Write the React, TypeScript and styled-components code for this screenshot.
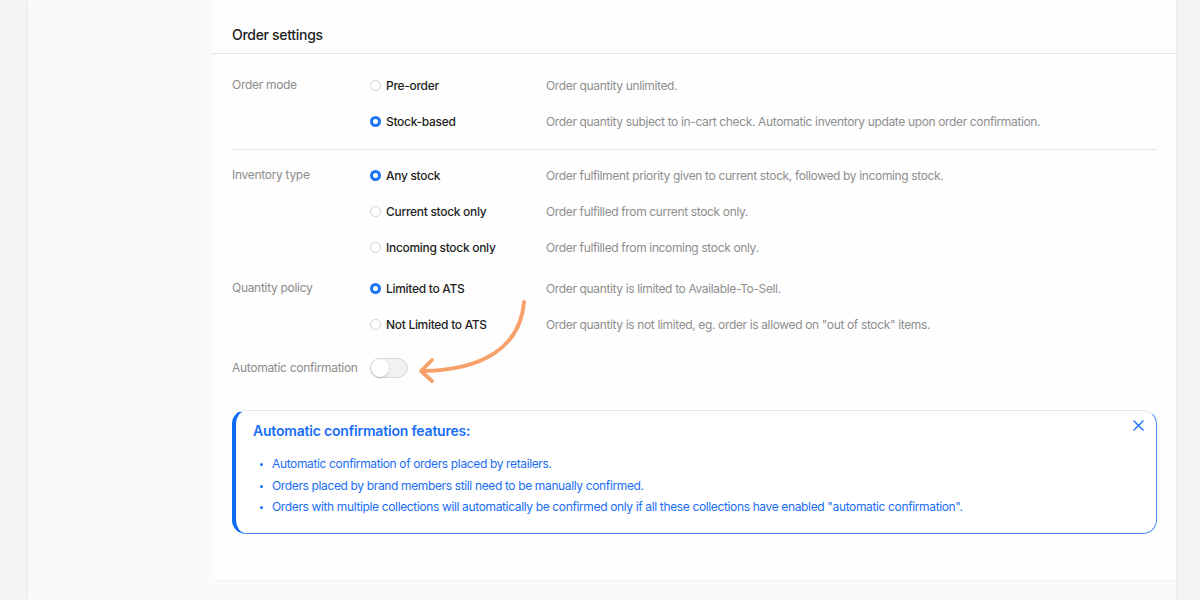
import styled, { createGlobalStyle } from 'styled-components';

const GlobalStyle = createGlobalStyle`
  html, body {
    margin: 0;
    padding: 0;
    background: #f2f2f2;
    font-family: Inter, "Liberation Sans", sans-serif;
  }
`;

interface Option {
  label: string;
  description: string;
  checked?: boolean;
}

interface Field {
  label: string;
  options: Option[];
  divider?: boolean;
  gap: number;
}

const fields: Field[] = [
  {
    label: 'Order mode',
    gap: 13,
    divider: true,
    options: [
      { label: 'Pre-order', description: 'Order quantity unlimited.' },
      {
        label: 'Stock-based',
        description:
          'Order quantity subject to in-cart check. Automatic inventory update upon order confirmation.',
        checked: true,
      },
    ],
  },
  {
    label: 'Inventory type',
    gap: 7,
    options: [
      {
        label: 'Any stock',
        description: 'Order fulfilment priority given to current stock, followed by incoming stock.',
        checked: true,
      },
      { label: 'Current stock only', description: 'Order fulfilled from current stock only.' },
      { label: 'Incoming stock only', description: 'Order fulfilled from incoming stock only.' },
    ],
  },
  {
    label: 'Quantity policy',
    gap: 5,
    options: [
      {
        label: 'Limited to ATS',
        description: 'Order quantity is limited to Available-To-Sell.',
        checked: true,
      },
      {
        label: 'Not Limited to ATS',
        description: 'Order quantity is not limited, eg. order is allowed on "out of stock" items.',
      },
    ],
  },
];

const notes = [
  'Automatic confirmation of orders placed by retailers.',
  'Orders placed by brand members still need to be manually confirmed.',
  'Orders with multiple collections will automatically be confirmed only if all these collections have enabled "automatic confirmation".',
];

export default function App() {
  return (
    <>
      <GlobalStyle />
      <Page>
        <Panel>
          <Sidebar />
          <Main>
            <Header>Order settings</Header>
            <Body>
              {fields.map((field) => (
                <FieldRow key={field.label} $gap={field.gap} $divider={!!field.divider}>
                  <Label>{field.label}</Label>
                  <Options>
                    {field.options.map((opt) => (
                      <OptionRow key={opt.label}>
                        <RadioWrap>
                          <Radio $checked={!!opt.checked} />
                          <OptionLabel>{opt.label}</OptionLabel>
                        </RadioWrap>
                        <Description>{opt.description}</Description>
                      </OptionRow>
                    ))}
                  </Options>
                </FieldRow>
              ))}

              <FieldRow $gap={8} $divider={false}>
                <Label>Automatic confirmation</Label>
                <Options>
                  <OptionRow>
                    <Toggle>
                      <Knob />
                    </Toggle>
                  </OptionRow>
                </Options>
              </FieldRow>

              <InfoBox>
                <InfoTitle>Automatic confirmation features:</InfoTitle>
                <CloseButton aria-label="close">
                  <svg width="11" height="11" viewBox="0 0 11 11">
                    <path d="M1 1L10 10M10 1L1 10" stroke="#1a6ef5" strokeWidth="1.4" strokeLinecap="round" />
                  </svg>
                </CloseButton>
                <NoteList>
                  {notes.map((n) => (
                    <Note key={n}>{n}</Note>
                  ))}
                </NoteList>
              </InfoBox>
            </Body>
            <Arrow width="130" height="100" viewBox="0 0 130 100">
              <path
                d="M114 12 C 110 58, 72 80, 13 81"
                fill="none"
                stroke="#f6a06a"
                strokeWidth="3.8"
                strokeLinecap="round"
              />
              <path
                d="M22 70 L11 81 L22 91"
                fill="none"
                stroke="#f6a06a"
                strokeWidth="3.8"
                strokeLinecap="round"
                strokeLinejoin="round"
              />
            </Arrow>
          </Main>
        </Panel>
      </Page>
    </>
  );
}

const Page = styled.div`
  width: 1200px;
  height: 600px;
  overflow: hidden;
  display: flex;
  padding-left: 28px;
  box-sizing: border-box;
  background: #f3f3f3;
`;

const Panel = styled.div`
  width: 1148px;
  display: flex;
  background: #fafafa;
  box-shadow: 0 0 4px rgba(0, 0, 0, 0.06);
`;

const Sidebar = styled.div`
  width: 185px;
  flex-shrink: 0;
  background: #fafafa;
`;

const Main = styled.div`
  position: relative;
  flex: 1;
  height: 580px;
  background: #fefefe;
  border-bottom: 1px solid #f1f1f1;
`;

const Header = styled.div`
  height: 54px;
  box-sizing: border-box;
  padding: 25px 19px 0;
  font-size: 14px;
  font-weight: 500;
  letter-spacing: -0.3px;
  color: #1e1e1e;
  line-height: 20px;
  border-bottom: 1px dotted #cfcfcf;
`;

const Body = styled.div`
  padding: 0 19px;
`;

const FieldRow = styled.div<{ $gap: number; $divider: boolean }>`
  display: flex;
  padding-top: ${(p) => p.$gap}px;
  padding-bottom: ${(p) => (p.$divider ? 10 : 0)}px;
  border-bottom: ${(p) => (p.$divider ? '1px dotted #d4d4d4' : 'none')};
`;

const Label = styled.div`
  width: 138px;
  flex-shrink: 0;
  height: 36px;
  line-height: 36px;
  font-size: 12px;
  letter-spacing: -0.3px;
  color: #8c8c8c;
`;

const Options = styled.div`
  flex: 1;
  display: flex;
  flex-direction: column;
`;

const OptionRow = styled.div`
  height: 36px;
  display: grid;
  grid-template-columns: 176px 1fr;
  align-items: center;
`;

const RadioWrap = styled.div`
  display: flex;
  align-items: center;
  gap: 5px;
`;

const Radio = styled.span<{ $checked: boolean }>`
  width: 11px;
  height: 11px;
  box-sizing: border-box;
  border-radius: 50%;
  background: #fff;
  border: ${(p) => (p.$checked ? '3.5px solid #1b74f2' : '1px solid #d2d2d2')};
`;

const OptionLabel = styled.span`
  font-size: 12px;
  font-weight: 500;
  letter-spacing: -0.3px;
  color: #1f1f1f;
`;

const Description = styled.span`
  font-size: 12px;
  letter-spacing: -0.36px;
  color: #8e8e8e;
`;

const Toggle = styled.div`
  width: 38px;
  height: 20px;
  box-sizing: border-box;
  border-radius: 10px;
  border: 1px solid #d8d8d8;
  background: #f1f1f1;
  position: relative;
`;

const Knob = styled.div`
  position: absolute;
  left: 0;
  top: 0;
  width: 18px;
  height: 18px;
  border-radius: 50%;
  background: #fff;
  box-shadow: 0 1px 2px rgba(0, 0, 0, 0.2);
`;

const InfoBox = styled.div`
  position: relative;
  margin-top: 24px;
  height: 124px;
  box-sizing: border-box;
  padding: 10px 20px 0 17px;
  background: #fff;
  border: 1px solid #4b8cf5;
  border-top: 1px dotted #d0d0d0;
  border-left: 4px solid #0b6cf2;
  border-radius: 14px;
`;

const InfoTitle = styled.div`
  font-size: 14px;
  font-weight: 600;
  letter-spacing: -0.2px;
  line-height: 20px;
  color: #1a6ef5;
`;

const CloseButton = styled.button`
  position: absolute;
  top: 9px;
  right: 12px;
  padding: 0;
  border: none;
  background: none;
  display: flex;
`;

const NoteList = styled.ul`
  margin: 12px 0 0;
  padding-left: 19px;
  list-style: none;
`;

const Note = styled.li`
  position: relative;
  font-size: 12px;
  letter-spacing: -0.36px;
  line-height: 21.5px;
  color: #1a6ef5;

  &::before {
    content: '';
    position: absolute;
    left: -12px;
    top: 10px;
    width: 3px;
    height: 3px;
    border-radius: 50%;
    background: #1a6ef5;
  }
`;

const Arrow = styled.svg`
  position: absolute;
  left: 197px;
  top: 290px;
  pointer-events: none;
`;
